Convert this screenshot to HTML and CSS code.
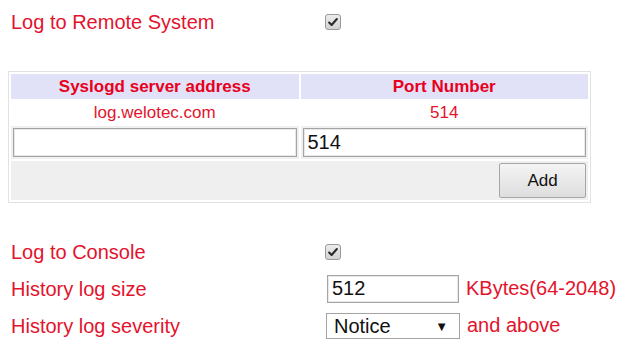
FILE: index.html
```html
<!DOCTYPE html>
<html>
<head>
<meta charset="utf-8">
<link rel="stylesheet" href="styles.css">
</head>
<body>
<div class="page">
  <div class="field-row remote-row">
    <span class="label">Log to Remote System</span>
    <span class="check"><svg viewBox="0 0 16 16" width="16" height="16"><path d="M3.6 8.6 L6.4 11.4 L12.4 4.6" fill="none" stroke="#2a2a2a" stroke-width="2.4" stroke-linecap="round" stroke-linejoin="round"/></svg></span>
  </div>

  <table class="server-table">
    <tr class="head">
      <th>Syslogd server address</th>
      <th>Port Number</th>
    </tr>
    <tr class="data">
      <td>log.welotec.com</td>
      <td>514</td>
    </tr>
    <tr class="inputs">
      <td><input class="text-input wide" type="text" value=""></td>
      <td><input class="text-input wide" type="text" value="514"></td>
    </tr>
    <tr class="actions">
      <td colspan="2"><button class="btn">Add</button></td>
    </tr>
  </table>

  <div class="settings">
    <div class="field-row">
      <span class="label">Log to Console</span>
      <span class="check"><svg viewBox="0 0 16 16" width="16" height="16"><path d="M3.6 8.6 L6.4 11.4 L12.4 4.6" fill="none" stroke="#2a2a2a" stroke-width="2.4" stroke-linecap="round" stroke-linejoin="round"/></svg></span>
    </div>
    <div class="field-row">
      <span class="label">History log size</span>
      <span class="control"><input class="text-input size" type="text" value="512"><span class="unit">KBytes(64-2048)</span></span>
    </div>
    <div class="field-row">
      <span class="label">History log severity</span>
      <span class="control"><span class="select-wrap"><select class="select"><option>Notice</option></select><span class="arrow">&#9660;</span></span><span class="unit">and above</span></span>
    </div>
  </div>
</div>
</body>
</html>
```
FILE: styles.css
```css
* { box-sizing: border-box; }
html, body { margin: 0; padding: 0; background: #fff; }
body {
  font-family: "Liberation Sans", Arial, sans-serif;
  color: #e3132d;
  width: 635px;
  height: 354px;
  overflow: hidden;
}
.page { padding: 6px 0 0 0; }

.field-row {
  display: grid;
  grid-template-columns: 315px auto;
  align-items: center;
  height: 37px;
  padding-left: 11px;
}
.remote-row { height: 32px; }
.label { font-size: 20px; line-height: 24px; }

.check {
  display: inline-flex;
  width: 16px;
  height: 16px;
  border: 1px solid #9a9a9a;
  border-radius: 3px;
  background: linear-gradient(#ececec, #d2d2d2);
  margin-left: -1px;
}
.check svg { width: 14px; height: 14px; }

.server-table {
  margin: 33px 0 0 8px;
  width: 583px;
  border: 1px solid #e2e2e2;
  border-spacing: 2px;
  table-layout: fixed;
}
.server-table th, .server-table td { padding: 0; text-align: center; }
.head th {
  background: #e1e1f7;
  height: 25px;
  font-size: 17px;
  font-weight: bold;
  color: #e8001c;
}
.data td { height: 23px; font-size: 17px; }
.inputs td { background: #f0f0f0; height: 33px; padding: 2px 2px; }
.actions td { background: #efefef; height: 39px; text-align: right; padding: 2px 2px; }

.settings { margin-top: 30px; }

.text-input {
  font-family: "Liberation Sans", Arial, sans-serif;
  font-size: 20px;
  color: #111;
  border: 1px solid #a4a4a4;
  box-shadow: inset 0 0 0 1px #e8e8e8;
  background: #fff;
  padding: 0 4px;
  outline: none;
}
.text-input.wide { width: 100%; height: 29px; display: block; }
.text-input.size { width: 132px; height: 28px; margin-left: 1px; }

.btn {
  font-family: "Liberation Sans", Arial, sans-serif;
  font-size: 17px;
  color: #111;
  width: 87px;
  height: 35px;
  border: 1px solid #a6a6a6;
  border-radius: 2px;
  background: linear-gradient(#f4f4f4, #dedede);
  padding: 0;
  vertical-align: middle;
}

.control { display: flex; align-items: center; }
.unit { font-size: 20px; margin-left: 7px; }

.select-wrap { position: relative; display: inline-block; }
.select {
  appearance: none;
  -webkit-appearance: none;
  font-family: "Liberation Sans", Arial, sans-serif;
  font-size: 20px;
  color: #111;
  width: 134px;
  height: 26px;
  border: 1px solid #a4a4a4;
  background: #fff;
  padding: 0 0 0 7px;
  border-radius: 0;
  outline: none;
}
.arrow {
  position: absolute;
  right: 12px;
  top: 6px;
  font-size: 13px;
  color: #111;
  pointer-events: none;
}
```
